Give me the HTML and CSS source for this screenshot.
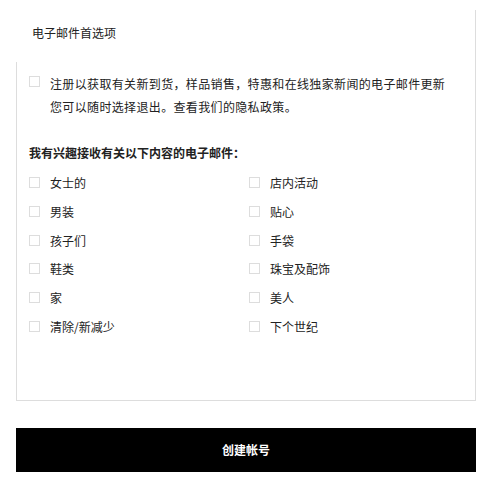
FILE: index.html
```html
<!DOCTYPE html>
<html lang="zh">
<head>
<meta charset="utf-8">
<link rel="stylesheet" href="styles.css">
</head>
<body>
<div class="page">
  <section class="prefs">
    <div class="prefs-head">电子邮件首选项</div>
    <div class="prefs-body">
      <div class="opt-row">
        <span class="box"></span>
        <p class="signup">注册以获取有关新到货，样品销售，特惠和在线独家新闻的电子邮件更新<br>您可以随时选择退出。查看我们的隐私政策。</p>
      </div>
      <h3 class="interest">我有兴趣接收有关以下内容的电子邮件：</h3>
      <div class="grid">
        <div class="item"><span class="box"></span><span>女士的</span></div>
        <div class="item"><span class="box"></span><span>店内活动</span></div>
        <div class="item"><span class="box"></span><span>男装</span></div>
        <div class="item"><span class="box"></span><span>贴心</span></div>
        <div class="item"><span class="box"></span><span>孩子们</span></div>
        <div class="item"><span class="box"></span><span>手袋</span></div>
        <div class="item"><span class="box"></span><span>鞋类</span></div>
        <div class="item"><span class="box"></span><span>珠宝及配饰</span></div>
        <div class="item"><span class="box"></span><span>家</span></div>
        <div class="item"><span class="box"></span><span>美人</span></div>
        <div class="item"><span class="box"></span><span>清除/新减少</span></div>
        <div class="item"><span class="box"></span><span>下个世纪</span></div>
      </div>
    </div>
  </section>
  <button class="create">创建帐号</button>
</div>
</body>
</html>
```
FILE: styles.css
```css
html, body {
  margin: 0;
  padding: 0;
  background: #fff;
}
body {
  font-family: "Noto Sans CJK SC", "Noto Sans", sans-serif;
  font-size: 12px;
  color: #222;
}
.page {
  width: 460px;
  padding: 10px 0 0 16px;
}
.prefs {
  border-right: 1px solid #ddd;
  border-bottom: 1px solid #ddd;
}
.prefs-head {
  padding: 13px 0 19px 16px;
  line-height: 20px;
}
.prefs-body {
  border-left: 1px solid #ddd;
  padding: 10px 0 63px 12px;
}
.opt-row {
  display: flex;
  gap: 10px;
}
.box {
  flex: none;
  width: 9px;
  height: 9px;
  border: 1px solid #ddd;
  margin-top: 4px;
  background: #fff;
}
.signup {
  margin: 0;
  line-height: 23px;
  letter-spacing: 0.35px;
  color: #222;
}
.interest {
  margin: 25px 0 10px 0;
  font-size: 12px;
  line-height: 20px;
  font-weight: bold;
  color: #222;
}
.grid {
  display: grid;
  grid-template-columns: 220px 200px;
  row-gap: 8.8px;
}
.item {
  display: flex;
  gap: 10px;
  line-height: 20px;
}
.create {
  display: block;
  width: 460px;
  height: 44px;
  margin-top: 27px;
  border: 0;
  background: #000;
  color: #fff;
  font-family: "Noto Sans CJK SC", "Noto Sans", sans-serif;
  font-size: 12px;
  font-weight: bold;
  padding: 0;
}
```
